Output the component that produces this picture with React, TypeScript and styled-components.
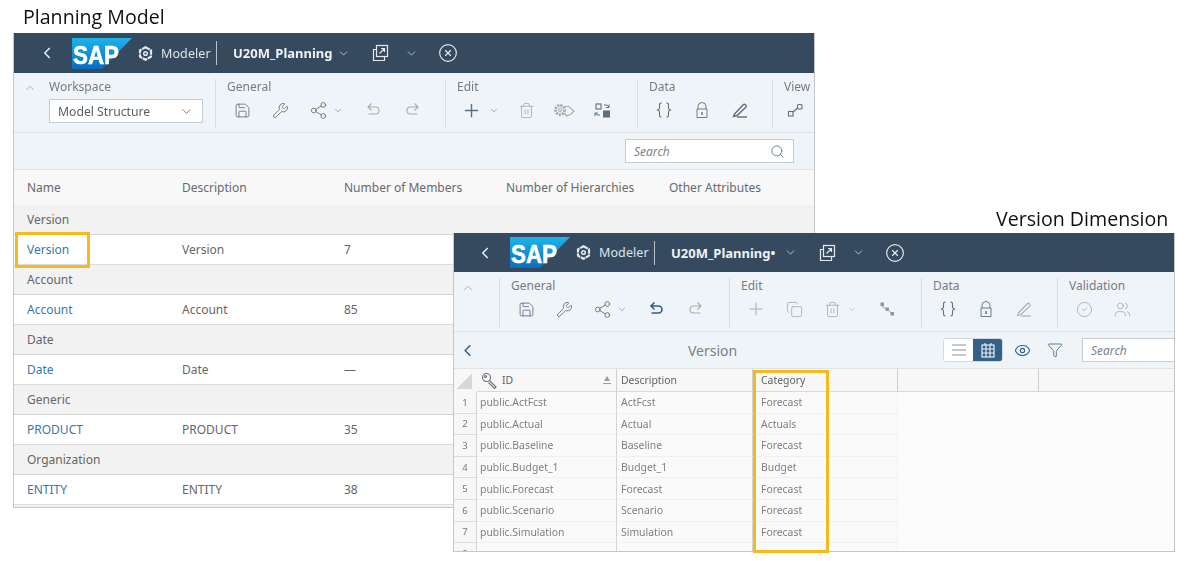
import * as React from 'react';
import styled, { createGlobalStyle } from 'styled-components';
import {
  ChevronDown, ChevronLeft, ChevronUp, CircleCheck, CircleX, Copy, Eye, Funnel,
  Plus, Save, Search, Share2, Trash2, Users, Wrench,
} from 'lucide-react';

const GlobalStyle = createGlobalStyle`
  html, body { margin: 0; padding: 0; background: #fff; }
  body { font-family: "Noto Sans", "Liberation Sans", sans-serif; color: #666; }
`;

const Stage = styled.div`
  position: relative;
  width: 1200px;
  height: 561px;
  overflow: hidden;
  filter: blur(0.35px);
`;

const Caption = styled.div<{ $x: number; $y: number }>`
  position: absolute;
  left: ${p => p.$x}px;
  top: ${p => p.$y}px;
  font-family: "Open Sans", "Noto Sans", sans-serif;
  font-size: 19.6px;
  line-height: 24px;
  white-space: nowrap;
  color: #111;
`;

const Window = styled.div<{ $x: number; $y: number; $w: number; $h: number }>`
  position: absolute;
  left: ${p => p.$x}px;
  top: ${p => p.$y}px;
  width: ${p => p.$w}px;
  height: ${p => p.$h}px;
  box-sizing: border-box;
  display: flex;
  flex-direction: column;
  overflow: hidden;
  background: #f2f2f2;
  border: 1px solid #c4c6c8;
  border-top: 0;
`;

const Shell = styled.div<{ $pad: number; $h: number }>`
  height: ${p => p.$h}px;
  flex: none;
  display: flex;
  align-items: center;
  padding-left: ${p => p.$pad}px;
  background: #354a5f;
  color: #e4e9ee;
`;

const Slot = styled.span<{ $w?: number; $ml?: number }>`
  flex: none;
  width: ${p => (p.$w ? `${p.$w}px` : 'auto')};
  margin-left: ${p => p.$ml ?? 0}px;
  display: inline-flex;
  align-items: center;
  justify-content: center;
`;

const ShellLabel = styled.span`
  font-size: 12.5px;
  letter-spacing: 0.1px;
  margin-left: 8px;
  width: 55px;
  color: #dfe5ea;
`;

const ShellDivider = styled.span`
  width: 1px;
  height: 24px;
  background: #b8c2cc;
`;

const ShellTitle = styled.span<{ $w: number }>`
  width: ${p => p.$w}px;
  margin-left: 16px;
  font-size: 13px;
  font-weight: 700;
  color: #eef2f5;
  white-space: nowrap;
`;

const Ribbon = styled.div`
  height: 60px;
  flex: none;
  box-sizing: border-box;
  display: flex;
  padding: 6px 0 4px;
  background: #eff4f9;
  border-bottom: 1px solid #dde3e9;
`;

const Section = styled.div<{ $w: number; $pad?: number }>`
  width: ${p => p.$w}px;
  flex: none;
  box-sizing: border-box;
  padding-left: ${p => p.$pad ?? 7}px;
  border-left: 1px solid #d8dee4;
  &:first-of-type { border-left: 0; }
`;

const SectionLabel = styled.div<{ $flush?: boolean }>`
  font-size: 12px;
  line-height: 16px;
  padding-left: ${p => (p.$flush ? 0 : 4)}px;
  color: #777b80;
`;

const ToolRow = styled.div`
  height: 28px;
  margin-top: 1px;
  display: flex;
  align-items: center;
  color: #5d6f81;
`;

const Tool = styled(Slot)<{ $off?: boolean; $active?: boolean }>`
  color: ${p => (p.$active ? '#2f5f88' : p.$off ? '#a3adb6' : 'inherit')};
  height: 20px;
`;

const CollapseTool = styled.span`
  display: inline-flex;
  color: #8d959c;
  margin-top: 2px;
`;

const WorkspaceHead = styled.div`
  display: flex;
  align-items: center;
  gap: 12px;
  margin-left: -22px;
`;

const WorkspaceSelect = styled.div`
  margin: 4px 0 0 4px;
  width: 154px;
  height: 24px;
  box-sizing: border-box;
  display: flex;
  align-items: center;
  justify-content: space-between;
  padding: 0 8px;
  background: #fff;
  border: 1px solid #c6ccd2;
  font-size: 12.2px;
  color: #5b5e61;
`;

const SearchBar = styled.div`
  height: 37px;
  flex: none;
  box-sizing: border-box;
  display: flex;
  align-items: center;
  justify-content: flex-end;
  padding-right: 20px;
  background: #eff4f9;
  border-bottom: 1px solid #dde3e9;
`;

const SearchBox = styled.div<{ $w: number }>`
  width: ${p => p.$w}px;
  height: 24px;
  flex: none;
  box-sizing: border-box;
  display: flex;
  align-items: center;
  justify-content: space-between;
  padding: 0 8px;
  background: #fff;
  border: 1px solid #c6ccd2;
  font-size: 12px;
  font-style: italic;
  color: #7d8287;
`;

const Columns = styled.div`
  display: grid;
  grid-template-columns: 155px 162px 162px 163px 1fr;
  align-items: center;
  padding-left: 13px;
  font-size: 12px;
`;

const HeadRow = styled(Columns)`
  height: 35px;
  flex: none;
  background: #f8f8f8;
  color: #67696c;
`;

const GroupRow = styled(Columns)`
  height: 30px;
  flex: none;
  box-sizing: border-box;
  background: #f2f2f2;
  border-bottom: 1px solid #d4d4d4;
  color: #666;
`;

const ItemRow = styled(GroupRow)`
  background: #fff;
  border-bottom: 1px solid #dcdcdc;
`;

const ItemLink = styled.span`
  color: #3a77ab;
`;

const Highlight = styled.div<{ $x: number; $y: number; $w: number; $h: number }>`
  position: absolute;
  left: ${p => p.$x}px;
  top: ${p => p.$y}px;
  width: ${p => p.$w}px;
  height: ${p => p.$h}px;
  box-sizing: border-box;
  border: 3px solid #f6b91e;
`;

const DetailBar = styled.div`
  height: 37px;
  flex: none;
  box-sizing: border-box;
  display: flex;
  align-items: center;
  background: #eff4f9;
  border-bottom: 1px solid #dde3e9;
  color: #346187;
`;

const DetailTitle = styled.div`
  width: 465px;
  flex: none;
  margin-right: -2px;
  text-align: center;
  font-size: 14px;
  color: #7b8085;
`;

const Segmented = styled.div`
  width: 60px;
  height: 24px;
  flex: none;
  display: flex;
  box-sizing: border-box;
  margin-right: 2px;
  background: #fff;
  border: 1px solid #d3d8dd;
  border-radius: 3px;
  overflow: hidden;
`;

const Segment = styled.span<{ $on?: boolean }>`
  flex: 1;
  display: inline-flex;
  align-items: center;
  justify-content: center;
  background: ${p => (p.$on ? '#346187' : '#fff')};
  color: ${p => (p.$on ? '#e8eef3' : '#8b949c')};
`;

const Sheet = styled.div`
  flex: 1;
  min-height: 0;
  overflow: hidden;
  display: grid;
  grid-template-columns: 23px 140px 136px 145px 141px 1fr;
  grid-template-rows: 23px;
  grid-auto-rows: 21.6px;
  background: #fafafa;
  font-size: 10.4px;
  color: #7d7f82;
`;

const HeadCell = styled.div<{ $line?: boolean; $pad?: number }>`
  display: flex;
  align-items: center;
  justify-content: space-between;
  padding: 0 4px 0 ${p => p.$pad ?? 4}px;
  min-width: 0;
  background: #f7f7f7;
  color: #5f6265;
  border-bottom: 1px solid #d9d9d9;
  border-right: 1px solid ${p => (p.$line ? '#cfcfcf' : 'transparent')};
`;

const Corner = styled.div`
  background: linear-gradient(135deg, #f7f7f7 50%, #d5d7d9 50%);
  border-right: 5px solid #f7f7f7;
  border-left: 3px solid #f7f7f7;
  border-top: 4px solid #f7f7f7;
  border-bottom: 3px solid #f7f7f7;
  box-shadow: 0 1px 0 #d9d9d9;
`;

const IdLabel = styled.span`
  display: inline-flex;
  align-items: center;
  gap: 4px;
`;

const RowNumber = styled.div`
  display: flex;
  align-items: center;
  justify-content: center;
  background: #f7f7f7;
  color: #74777a;
  font-size: 9.5px;
  border-right: 1px solid #d4d4d4;
  border-bottom: 1px solid #dcdcdc;
`;

const Cell = styled.div<{ $line?: boolean; $pad?: number }>`
  display: flex;
  align-items: center;
  padding-left: ${p => p.$pad ?? 3}px;
  min-width: 0;
  border-bottom: 1px solid #f0f0f0;
  border-right: 1px solid ${p => (p.$line ? '#d4d4d4' : '#f3f3f3')};
`;

const BlankCell = styled.div`
  background: #fcfcfc;
`;

const SapLogo = () => (
  <svg width="60" height="31" viewBox="0 0 60 31">
    <defs>
      <linearGradient id="sap" x1="0" y1="0" x2="0" y2="1">
        <stop offset="0" stopColor="#1eb4ea" />
        <stop offset="1" stopColor="#0a6cc0" />
      </linearGradient>
    </defs>
    <path d="M0 0H60L30 31H0Z" fill="url(#sap)" />
    <text x="1" y="25.5" fontFamily="Liberation Sans" fontSize="26" fontWeight="700" textLength="46" lengthAdjust="spacingAndGlyphs" fill="#fff" stroke="#fff" strokeWidth="0.6">SAP</text>
  </svg>
);

const ModelerIcon = () => (
  <svg width="15" height="15" viewBox="0 0 15 15" fill="none" stroke="#e4e9ee">
    <path d="M7.5 1.2 13 4.3v6.4l-5.500 3.100L2 10.700V4.300Z" strokeWidth="2.2" strokeDasharray="5 0.7" />
    <circle cx="7.5" cy="7.5" r="1.8" strokeWidth="1.5" />
  </svg>
);

const PopoutIcon = () => (
  <svg width="18" height="18" viewBox="0 0 18 18" fill="none" stroke="currentColor" strokeWidth="1.2">
    <rect x="5.5" y="1.5" width="11" height="11" />
    <path d="M5.5 5.5h-3v11h11v-4M8.5 9.5l5-5M10 4.5h3.500V8" />
  </svg>
);

const UndoIcon = ({ flip, weight = 1.1 }: { flip?: boolean; weight?: number }) => (
  <svg width="18" height="18" viewBox="0 0 18 18" fill="none" stroke="currentColor" strokeWidth={weight} style={flip ? { transform: 'scaleX(-1)' } : undefined}>
    <path d="M6.5 2.5 3 6l3.500 3.500M3 6h7.500a3.500 3.500 0 0 1 0 7H3.500" />
  </svg>
);

const LockIcon = () => (
  <svg width="16" height="18" viewBox="0 0 16 18" fill="none" stroke="currentColor" strokeWidth="0.9">
    <path d="M4 8V5.500a4 4 0 0 1 8 0V8M3 8h10v8.500H3z" />
    <path d="M8 11v3" strokeWidth="1.4" />
  </svg>
);

const PenIcon = ({ heavy }: { heavy?: boolean }) => (
  <svg width="18" height="18" viewBox="0 0 18 18" fill="none" stroke="currentColor" strokeWidth={heavy ? 1.4 : 1.1}>
    <path d="M3.5 13 12.500 3.500c1-1 3.500 1 2.500 2.500L6 14.500l-3.500 1z" />
    <path d="M6 16h10" />
  </svg>
);

const GearHand = () => (
  <svg width="24" height="18" viewBox="0 0 24 18" fill="none" stroke="currentColor">
    <circle cx="8" cy="9" r="4.5" strokeWidth="3" strokeDasharray="2 1" />
    <circle cx="8" cy="9" r="1.5" strokeWidth="1" />
    <path d="M12 6l4-1 6 5-3 3-4 2-3-3" strokeWidth="1.1" />
  </svg>
);

const TransformIcon = () => (
  <svg width="18" height="18" viewBox="0 0 18 18" fill="none" stroke="currentColor">
    <rect x="3" y="3" width="5" height="5" strokeWidth="1.1" />
    <rect x="10.5" y="10" width="6" height="6" fill="currentColor" />
    <path d="M11 4h3l2 2M16 3.500V6.500h-3M7 14H4L2 12M2 15V12h3" strokeWidth="1" />
  </svg>
);

const TreeIcon = () => (
  <svg width="16" height="16" viewBox="0 0 16 16" fill="#8a98a6" stroke="#8a98a6">
    <rect x="2" y="2" width="2.5" height="2.5" />
    <rect x="7" y="7" width="2.4" height="2.4" />
    <rect x="12" y="11.5" width="2.5" height="2.5" />
    <path d="M3.500 4v2l4 2M9 9l4 3.500" strokeWidth="0.8" fill="none" />
  </svg>
);

const BracesIcon = () => (
  <svg width="16" height="18" viewBox="0 0 16 18" fill="none" stroke="currentColor" strokeWidth="1.1">
    <path d="M5.500 2C3.500 2 3.500 3 3.500 5.500S3.500 8 1.500 9c2 1 2 1 2 3.500S3.500 16 5.500 16M10.500 2c2 0 2 1 2 3.500S12.500 8 14.500 9c-2 1-2 1-2 3.500s0 3.500-2 3.500" />
  </svg>
);

const LinkNodes = () => (
  <svg width="18" height="18" viewBox="0 0 18 18" fill="none" stroke="currentColor" strokeWidth="1.1">
    <rect x="2.5" y="10.5" width="4.5" height="4.5" />
    <rect x="11.5" y="3.5" width="4.5" height="4.5" rx="1" />
    <path d="M7 11 11.500 7" />
  </svg>
);

const KeyIcon = () => (
  <svg width="17" height="17" viewBox="0 0 17 17" fill="none" stroke="#6b7176" strokeWidth="1.1">
    <circle cx="5.5" cy="5.5" r="4" />
    <circle cx="4.5" cy="4.5" r="1" />
    <path d="M8.500 8.500 15 15l-1.500 1.500-6-6" />
  </svg>
);

const ListIcon = () => (
  <svg width="16" height="14" viewBox="0 0 16 14" stroke="currentColor" strokeWidth="1.2">
    <path d="M1 2h14M1 7h14M1 12h14" />
  </svg>
);

const GridIcon = () => (
  <svg width="14" height="15" viewBox="0 0 14 15" fill="none" stroke="currentColor" strokeWidth="1.2">
    <rect x="1" y="2" width="12" height="12" />
    <path d="M1 6h12M1 10h12M5 2v12M9 2v12M4 0v2M10 0v2" />
  </svg>
);

const SortIcon = () => (
  <svg width="10" height="10" viewBox="0 0 10 10" fill="#9a9da0">
    <path d="M5 1 8 6H2Z" />
    <path d="M1 8h8v1H1Z" />
  </svg>
);

const ico = { size: 17, strokeWidth: 1.2 };
const chev = { size: 13, strokeWidth: 1.3 };

type HeaderProps = { name: string; height: number; pad: number; titleWidth: number };

const Header = ({ name, height, pad, titleWidth }: HeaderProps) => (
  <Shell $pad={pad} $h={height}>
    <Slot $w={18}><ChevronLeft size={22} strokeWidth={2.2} /></Slot>
    <Slot $ml={16}><SapLogo /></Slot>
    <Slot $w={15} $ml={6}><ModelerIcon /></Slot>
    <ShellLabel>Modeler</ShellLabel>
    <ShellDivider />
    <ShellTitle $w={titleWidth}>{name}</ShellTitle>
    <Slot $w={14}><ChevronDown {...chev} /></Slot>
    <Slot $w={20} $ml={20}><PopoutIcon /></Slot>
    <Slot $w={14} $ml={14}><ChevronDown {...chev} /></Slot>
    <Slot $w={20} $ml={20}><CircleX size={20} strokeWidth={1.4} /></Slot>
  </Shell>
);

const PLAN_GROUPS = [
  { group: 'Version', name: 'Version', desc: 'Version', count: '7' },
  { group: 'Account', name: 'Account', desc: 'Account', count: '85' },
  { group: 'Date', name: 'Date', desc: 'Date', count: '—' },
  { group: 'Generic', name: 'PRODUCT', desc: 'PRODUCT', count: '35' },
  { group: 'Organization', name: 'ENTITY', desc: 'ENTITY', count: '38' },
];

const PlanningWindow = () => (
  <Window $x={13} $y={33} $w={802} $h={475}>
    <Header name="U20M_Planning" height={40} pad={24} titleWidth={103} />
    <Ribbon>
      <Section $w={201} $pad={31}>
        <WorkspaceHead>
          <CollapseTool><ChevronUp size={14} strokeWidth={1.2} /></CollapseTool>
          <SectionLabel $flush>Workspace</SectionLabel>
        </WorkspaceHead>
        <WorkspaceSelect>Model Structure<ChevronDown size={15} strokeWidth={1.2} /></WorkspaceSelect>
      </Section>
      <Section $w={230}>
        <SectionLabel>General</SectionLabel>
        <ToolRow>
          <Tool $w={38}><Save {...ico} /></Tool>
          <Tool $w={38}><Wrench {...ico} /></Tool>
          <Tool $w={38}><Share2 size={19} strokeWidth={1.1} /></Tool>
          <Tool $w={10} $ml={-4}><ChevronDown {...chev} /></Tool>
          <Tool $w={38} $ml={12} $off><UndoIcon /></Tool>
          <Tool $w={38} $off><UndoIcon flip /></Tool>
        </ToolRow>
      </Section>
      <Section $w={192}>
        <SectionLabel>Edit</SectionLabel>
        <ToolRow>
          <Tool $w={36}><Plus size={21} strokeWidth={1.6} /></Tool>
          <Tool $w={10}><ChevronDown {...chev} /></Tool>
          <Tool $w={38} $ml={8} $off><Trash2 {...ico} /></Tool>
          <Tool $w={38} $off><GearHand /></Tool>
          <Tool $w={38}><TransformIcon /></Tool>
        </ToolRow>
      </Section>
      <Section $w={135}>
        <SectionLabel>Data</SectionLabel>
        <ToolRow>
          <Tool $w={38}><BracesIcon /></Tool>
          <Tool $w={38}><LockIcon /></Tool>
          <Tool $w={38}><PenIcon heavy /></Tool>
        </ToolRow>
      </Section>
      <Section $w={60}>
        <SectionLabel>View</SectionLabel>
        <ToolRow><Tool $w={30}><LinkNodes /></Tool></ToolRow>
      </Section>
    </Ribbon>
    <SearchBar>
      <SearchBox $w={169}>Search<Search size={15} strokeWidth={1.3} color="#5b6b7a" /></SearchBox>
    </SearchBar>
    <HeadRow>
      <span>Name</span>
      <span>Description</span>
      <span>Number of Members</span>
      <span>Number of Hierarchies</span>
      <span>Other Attributes</span>
    </HeadRow>
    {PLAN_GROUPS.map(row => (
      <React.Fragment key={row.group}>
        <GroupRow><span>{row.group}</span></GroupRow>
        <ItemRow>
          <ItemLink>{row.name}</ItemLink>
          <span>{row.desc}</span>
          <span>{row.count}</span>
        </ItemRow>
      </React.Fragment>
    ))}
  </Window>
);

const VERSIONS = [
  ['public.ActFcst', 'ActFcst', 'Forecast'],
  ['public.Actual', 'Actual', 'Actuals'],
  ['public.Baseline', 'Baseline', 'Forecast'],
  ['public.Budget_1', 'Budget_1', 'Budget'],
  ['public.Forecast', 'Forecast', 'Forecast'],
  ['public.Scenario', 'Scenario', 'Forecast'],
  ['public.Simulation', 'Simulation', 'Forecast'],
  ['', '', ''],
];

const VersionWindow = () => (
  <Window $x={453} $y={233} $w={722} $h={319}>
    <Header name="U20M_Planning•" height={39} pad={22} titleWidth={112} />
    <Ribbon>
      <Section $w={45}>
        <CollapseTool><ChevronUp size={14} strokeWidth={1.2} /></CollapseTool>
      </Section>
      <Section $w={230}>
        <SectionLabel>General</SectionLabel>
        <ToolRow>
          <Tool $w={38}><Save {...ico} /></Tool>
          <Tool $w={38}><Wrench {...ico} /></Tool>
          <Tool $w={38}><Share2 size={19} strokeWidth={1.1} /></Tool>
          <Tool $w={10} $ml={-4}><ChevronDown {...chev} /></Tool>
          <Tool $w={38} $ml={11} $active><UndoIcon weight={1.6} /></Tool>
          <Tool $w={38} $off><UndoIcon flip /></Tool>
        </ToolRow>
      </Section>
      <Section $w={192}>
        <SectionLabel>Edit</SectionLabel>
        <ToolRow>
          <Tool $w={38} $off><Plus size={20} strokeWidth={1.2} /></Tool>
          <Tool $w={38} $off><Copy {...ico} /></Tool>
          <Tool $w={38} $off><Trash2 {...ico} /></Tool>
          <Tool $w={10} $ml={-4} $off><ChevronDown {...chev} /></Tool>
          <Tool $w={38} $ml={11} $off><TreeIcon /></Tool>
        </ToolRow>
      </Section>
      <Section $w={136}>
        <SectionLabel>Data</SectionLabel>
        <ToolRow>
          <Tool $w={38}><BracesIcon /></Tool>
          <Tool $w={38}><LockIcon /></Tool>
          <Tool $w={38} $off><PenIcon /></Tool>
        </ToolRow>
      </Section>
      <Section $w={118}>
        <SectionLabel>Validation</SectionLabel>
        <ToolRow>
          <Tool $w={38} $off><CircleCheck {...ico} /></Tool>
          <Tool $w={38} $off><Users {...ico} /></Tool>
        </ToolRow>
      </Section>
    </Ribbon>
    <DetailBar>
      <Slot $w={26}><ChevronLeft size={19} strokeWidth={2} /></Slot>
      <DetailTitle>Version</DetailTitle>
      <Segmented>
        <Segment><ListIcon /></Segment>
        <Segment $on><GridIcon /></Segment>
      </Segmented>
      <Slot $w={35}><Eye size={17} strokeWidth={1.5} /></Slot>
      <Slot $w={30}><Funnel size={16} strokeWidth={1.2} /></Slot>
      <Slot $ml={12}><SearchBox $w={120}>Search<span /></SearchBox></Slot>
    </DetailBar>
    <Sheet>
      <Corner />
      <HeadCell $line>
        <IdLabel><KeyIcon />ID</IdLabel>
        <SortIcon />
      </HeadCell>
      <HeadCell $line>Description</HeadCell>
      <HeadCell $line $pad={8}>Category</HeadCell>
      <HeadCell $line />
      <HeadCell />
      {VERSIONS.map(([id, desc, cat], i) => (
        <React.Fragment key={i}>
          <RowNumber>{i + 1}</RowNumber>
          <Cell $line>{id}</Cell>
          <Cell $line $pad={4}>{desc}</Cell>
          <Cell $pad={8}>{cat}</Cell>
          <BlankCell />
          <BlankCell />
        </React.Fragment>
      ))}
    </Sheet>
  </Window>
);

const App = () => (
  <>
    <GlobalStyle />
    <Stage>
      <Caption $x={23} $y={5}>Planning Model</Caption>
      <Caption $x={996} $y={207}>Version Dimension</Caption>
      <PlanningWindow />
      <Highlight $x={15} $y={232} $w={75} $h={36} />
      <VersionWindow />
      <Highlight $x={753} $y={370} $w={76} $h={183} />
    </Stage>
  </>
);

export default App;
